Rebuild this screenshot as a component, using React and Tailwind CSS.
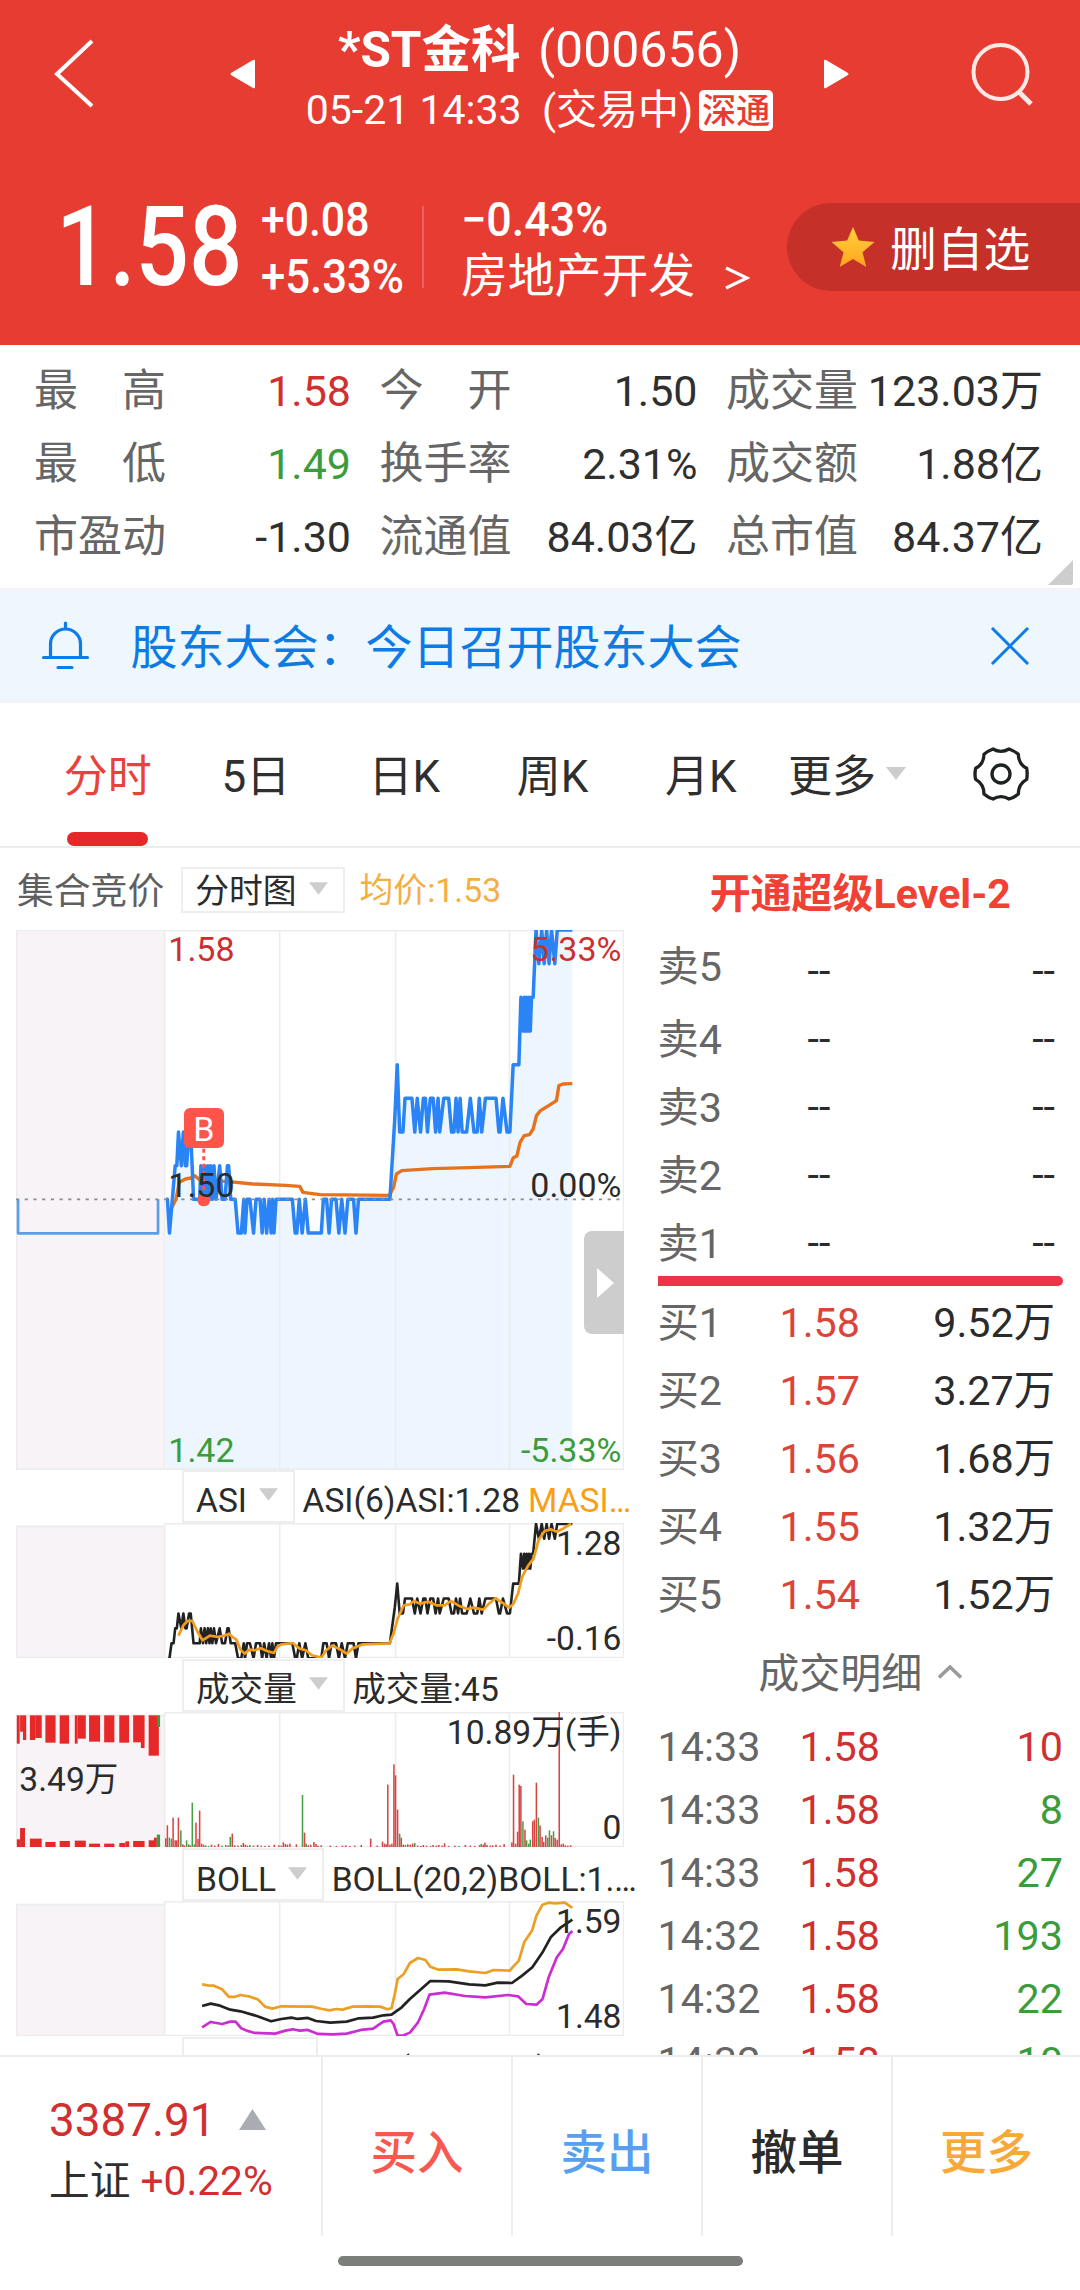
import React from 'react';
import classNames from 'clsx';

const stats = [
  ['最高', '1.58', 'text-[#d0302f]'],
  ['今开', '1.50', 'text-[#2f2f2f]'],
  ['成交量', '123.03万', 'text-[#2f2f2f]'],
  ['最低', '1.49', 'text-[#3a9c3a]'],
  ['换手率', '2.31%', 'text-[#2f2f2f]'],
  ['成交额', '1.88亿', 'text-[#2f2f2f]'],
  ['市盈动', '-1.30', 'text-[#2f2f2f]'],
  ['流通值', '84.03亿', 'text-[#2f2f2f]'],
  ['总市值', '84.37亿', 'text-[#2f2f2f]'],
];

const tabs = ['分时', '5日', '日K', '周K', '月K'];

const asks = ['卖5', '卖4', '卖3', '卖2', '卖1'];

const bids = [
  ['买1', '1.58', '9.52万'],
  ['买2', '1.57', '3.27万'],
  ['买3', '1.56', '1.68万'],
  ['买4', '1.55', '1.32万'],
  ['买5', '1.54', '1.52万'],
];

const ticks = [
  ['14:33', '1.58', '10', true],
  ['14:33', '1.58', '8', false],
  ['14:33', '1.58', '27', false],
  ['14:32', '1.58', '193', false],
  ['14:32', '1.58', '22', false],
  ['14:32', '1.58', '10', false],
];

// [x, cents above yesterday's close]
const morning = [
  [430, 1], [434, 1], [438, 2], [445, 1], [450, 2], [455, 1], [458, 1],
  [464, 2], [468, 2], [475, 0], [490, 0], [493, 1], [498, 0], [502, 1],
  [506, 0], [510, 1], [514, 0], [517, 1], [521, 0], [525, 1], [530, 0],
  [539, 1], [545, 0], [552, 0], [558, 1], [561, 1], [566, 0], [577, 0],
  [584, -1], [592, -1], [598, 0], [601, -1], [606, 0], [613, 0], [622, -1],
  [628, 0], [638, 0], [643, -1], [648, 0], [654, -1], [660, 0], [665, -1],
  [668, 0], [672, -1], [677, 0], [717, 0], [724, -1], [728, -1], [734, 0],
  [741, -1], [749, 0], [756, -1], [788, -1], [793, 0], [801, 0], [807, -1],
  [813, 0], [824, 0], [831, -1], [838, 0], [846, -1], [853, 0], [867, 0],
  [873, -1], [879, 0], [956, 0],
];

const afternoon = [
  [968, 2.4], [974, 4], [980, 2], [988, 2], [993, 3], [1010, 3], [1017, 2],
  [1023, 3], [1031, 2], [1038, 3], [1043, 3], [1048, 2], [1055, 3],
  [1062, 3], [1068, 2], [1074, 3], [1078, 2], [1088, 3], [1100, 3],
  [1107, 2], [1113, 2], [1118, 3], [1123, 2], [1128, 3], [1133, 2],
  [1144, 2], [1153, 3], [1162, 2], [1170, 2], [1175, 3], [1181, 2],
  [1190, 3], [1216, 3], [1223, 2], [1226, 2], [1233, 3], [1243, 2],
  [1250, 2], [1258, 4], [1272, 4], [1277, 6], [1282, 5], [1285, 6],
  [1288, 5], [1291, 6], [1294, 5], [1297, 6], [1300, 5], [1303, 6],
  [1307, 6], [1314, 8],
  [1321, 7], [1328, 8], [1334, 7], [1340, 8], [1346, 7], [1352, 8],
  [1360, 7], [1366, 8], [1403, 8],
];

const price = [[407, 0], [411, 0], [416, -1], ...morning, ...afternoon];
const asi = [[416, -1], [421, 0], [426, 0], ...morning, ...afternoon];

const average =
  '422,860 432,836 440,785 455,775 468,772 478,765 490,778 505,780 555,782 620,790 700,794 735,797 743,815 785,822 955,824 965,800 972,760 985,750 1060,744 1150,741 1250,737 1258,712 1267,706 1275,665 1285,645 1298,642 1307,625 1315,585 1325,570 1345,555 1364,540 1370,495 1380,490 1403,489';
const masi =
  '438,436 450,405 460,392 472,392 485,425 497,450 515,436 535,440 550,436 562,430 570,440 580,448 590,478 600,490 612,478 625,480 640,474 655,482 672,488 680,470 690,462 718,458 735,475 750,480 765,495 788,502 800,480 815,466 835,478 850,490 865,474 890,462 955,459 965,430 975,385 990,345 1005,342 1015,332 1030,340 1050,334 1070,345 1090,345 1105,332 1125,346 1145,356 1160,352 1185,358 1197,342 1215,324 1235,340 1248,352 1258,342 1270,310 1280,260 1295,225 1308,205 1320,150 1335,122 1350,117 1365,124 1380,115 1400,100';
const bollUp =
  '496,431 510,434 525,435 545,446 562,469 575,469 590,463 610,467 632,476 650,498 668,504 690,497 765,498 790,505 808,509 825,505 840,507 865,498 900,497 932,498 950,506 960,503 968,460 975,415 990,400 1005,367 1025,352 1043,358 1055,378 1075,387 1120,386 1150,392 1190,397 1210,388 1250,390 1258,378 1272,360 1285,305 1305,268 1315,225 1330,192 1345,186 1360,188 1385,186 1395,195 1403,202';
const bollMid =
  '496,496 517,489 540,495 565,507 590,512 630,526 665,542 690,535 715,531 730,535 755,532 775,541 810,546 850,543 880,533 915,531 940,524 960,522 985,500 1005,475 1030,448 1055,421 1100,422 1150,431 1190,434 1220,426 1255,427 1280,405 1305,380 1330,335 1350,290 1375,260 1403,237';
const bollLow =
  '496,560 517,544 545,550 565,543 578,543 592,563 605,570 625,577 675,579 700,570 718,566 735,570 755,568 780,580 815,581 850,579 885,568 915,564 940,543 958,539 965,550 975,585 990,584 1005,576 1025,545 1040,505 1053,462 1090,456 1140,466 1190,470 1245,463 1270,467 1290,490 1315,492 1330,475 1345,410 1365,350 1380,325 1395,280 1403,271';

// [x, top, falling]
const volume = [
  [407, 1044], [411, 1005], [416, 1042, 1], [421, 1045, 1], [425, 982],
  [430, 1050], [434, 1050], [438, 982], [444, 1020, 1], [449, 1062],
  [453, 1066], [458, 1050, 1], [463, 1062, 1], [467, 1065], [472, 937, 1],
  [477, 1062, 1], [481, 997], [486, 1046], [490, 961], [495, 1060],
  [500, 1063, 1], [505, 1066], [512, 1067, 1], [519, 1063], [527, 1066],
  [536, 1061], [545, 1066, 1], [554, 1064], [560, 1065, 1], [565, 1040, 1],
  [570, 1030], [576, 1065], [584, 1066], [592, 1064, 1], [597, 1058],
  [602, 1063], [607, 1066], [613, 1064, 1], [622, 1066], [632, 1064],
  [641, 1066, 1], [650, 1067], [660, 1066], [673, 1063], [684, 1065],
  [690, 1066, 1], [695, 1056], [700, 1061], [705, 1063], [711, 1060],
  [727, 1062], [742, 914, 1], [747, 1027], [751, 1060, 1], [756, 1065],
  [762, 1063], [770, 1055], [775, 1061], [780, 1066], [788, 1065],
  [810, 1066], [825, 1067], [840, 1066], [848, 1065], [858, 1067],
  [870, 1066], [886, 1064], [909, 1045], [925, 1066], [938, 1054],
  [943, 1060], [947, 1062], [951, 883], [956, 1063], [961, 1060],
  [966, 822], [970, 855], [975, 958], [980, 1030, 1], [984, 1042],
  [989, 1063], [994, 1064, 1], [1000, 1062], [1006, 1063], [1012, 1060],
  [1017, 1058, 1], [1024, 1066], [1032, 1067], [1038, 1064], [1046, 1066],
  [1056, 1067, 1], [1062, 1064], [1070, 1066], [1076, 1064], [1084, 1066],
  [1090, 1059], [1100, 1067], [1115, 1066], [1125, 1067, 1], [1141, 1064],
  [1153, 1066], [1164, 1067], [1176, 1064, 1], [1180, 1061, 1],
  [1185, 1063], [1189, 1057], [1194, 1064], [1202, 1066], [1208, 1065],
  [1216, 1063], [1226, 1066], [1236, 1061], [1255, 1056], [1259, 853],
  [1264, 1060], [1269, 1024], [1273, 883], [1277, 887], [1282, 993, 1],
  [1287, 1018], [1291, 1050, 1], [1296, 1060, 1], [1300, 1048, 1],
  [1306, 993], [1310, 988], [1315, 877], [1320, 982, 1], [1324, 1006],
  [1329, 1040], [1333, 1055], [1338, 1035], [1343, 1042, 1],
  [1347, 1020, 1], [1352, 1035], [1357, 1023, 1], [1361, 1043],
  [1366, 1048], [1371, 665], [1376, 1062], [1381, 1060], [1386, 1065],
  [1392, 1066], [1399, 1065],
];

// [left, right, bottom of the hanging bar, falling]
const auctionTop = [
  [42, 49, 760], [50, 57, 724], [57, 65, 749], [74, 87, 749],
  [87, 103, 743], [112, 137, 757], [147, 170, 760], [184, 191, 760],
  [191, 211, 745], [219, 246, 754], [256, 281, 756], [293, 317, 757],
  [327, 348, 756], [346, 355, 773], [365, 390, 796], [386, 393, 710, 1],
];

const auctionBottom = [
  [42, 50, 1047], [50, 62, 1013], [74, 103, 1045], [112, 137, 1055],
  [147, 172, 1052], [184, 211, 1051], [219, 246, 1060], [256, 281, 1060],
  [293, 308, 1058], [308, 317, 1053], [327, 355, 1052], [365, 378, 1050],
  [378, 385, 1042], [385, 393, 1033, 1],
];

const toPoints = (data, zero, step) =>
  data.map(([x, level]) => `${x},${zero - step * level}`).join(' ');

const Caret = ({ className }) => (
  <svg viewBox="0 0 20 13" className={classNames('fill-[#cdcdcd]', className)}>
    <path d="M0 0h20L10 13z" />
  </svg>
);

const Line = ({ points, color, width = 2.7 }) => (
  <polyline
    points={points}
    fill="none"
    stroke={color}
    strokeWidth={width}
    strokeLinejoin="round"
    vectorEffect="non-scaling-stroke"
  />
);

const Frame = ({ top, left, bottom }) => (
  <>
    <rect x="40" y={left} width="364" height={bottom - left} fill="#f7f3f7" />
    <g stroke="#ececee" strokeWidth="1.6" fill="none">
      <path
        vectorEffect="non-scaling-stroke"
        d={`M404 ${left}H41.5V${bottom - 2}H404M404 ${top + 2}H1528.5V${bottom - 2}H404V${top + 2}M686 ${top}V${bottom}M970 ${top}V${bottom}M1249 ${top}V${bottom}`}
      />
    </g>
  </>
);

const Select = ({ label, className }) => (
  <div className="flex h-full items-center border-2 border-[#eeeeee] bg-white pr-[15px] pl-[12px]">
    <span className={className}>{label}</span>
    <Caret className="mb-[3px] ml-[12px] h-[13px] w-[19px]" />
  </div>
);

const Indicator = ({ name, value, extra, high, low, auction, children, viewBox }) => (
  <div className="h-[189.3px] shrink-0 text-[33.600px]">
    <div className="flex h-[53px] items-center pl-[182px]">
      <Select label={name} className="pt-[9px] leading-[43px]" />
      <span className="ml-[7.500px] pt-[9px] leading-[43px] whitespace-nowrap">
        {value}
        {extra && <span className="ml-[8px] text-[#fa9e16]">{extra}</span>}
      </span>
    </div>
    {viewBox && (
      <div className="relative ml-[16.3px] h-[135.3px] w-[608.2px]">
        <svg viewBox={viewBox} preserveAspectRatio="none" className="h-full w-full">
          {children}
        </svg>
        <span className="absolute top-0 right-[3px] leading-[41px]">{high}</span>
        <span className="absolute right-[3px] bottom-0 leading-[39px]">{low}</span>
        {auction && <span className="absolute top-[47px] left-[3px] leading-[41px]">{auction}</span>}
      </div>
    )}
  </div>
);

const Header = () => (
  <header className="h-[345px] bg-[#e73c32] text-white">
    <div className="flex h-[148px] pl-[53px]">
      <svg viewBox="0 0 42 70" className="mt-[39px] h-[70px] w-[42px]" fill="none" stroke="#fff" strokeWidth="4">
        <path d="M39 2L4 35l35 32" />
      </svg>
      <svg viewBox="0 0 26 30" className="mt-[59px] ml-[135px] h-[30px] w-[26px] fill-white">
        <path d="M23 1q2-1 2 1v26q0 2-2 1L1 16q-1-1 0-2z" />
      </svg>
      <div className="w-[567px] text-center">
        <h1 className="mt-[18px] text-[50px] leading-[64px] whitespace-nowrap">
          <b className="mr-[5px] text-[49.500px]">*ST金科</b> (000656)
        </h1>
        <div className="flex h-[56px] items-center justify-center text-[41px] leading-[56px] whitespace-pre">
          <span>05-21 14:33  (交易中)</span>
          <span className="ml-[6px] h-[41px] w-[74px] rounded-[5px] bg-white text-center text-[34px] leading-[43px] font-medium text-[#e73c32]">
            深通
          </span>
        </div>
      </div>
      <svg viewBox="0 0 26 30" className="mt-[59px] h-[30px] w-[26px] fill-white">
        <path d="M3 1Q1 0 1 2v26q0 2 2 1l22-13q1-1 0-2z" />
      </svg>
      <svg viewBox="0 0 64 64" className="mt-[43px] ml-[122px] h-[64px] w-[64px]" fill="none" stroke="#fbe9e8" strokeWidth="4">
        <circle cx="29.500" cy="29" r="27" />
        <path d="M48 49l12 12" strokeWidth="5" />
      </svg>
    </div>
    <div className="flex h-[197px]">
      <div className="mt-[49px] ml-[56px] w-[205px]">
        <div className="origin-left scale-x-[.84] text-[112px] leading-[100px] font-medium">1.58</div>
      </div>
      <div className="mt-[43px] w-[161px] text-[48px] leading-[57px] font-medium">
        <div className="origin-left scale-x-[.89]">+0.08</div>
        <div className="origin-left scale-x-[.91]">+5.33%</div>
      </div>
      <div className="mt-[58px] h-[82px] w-[2px] bg-white/20" />
      <div className="mt-[43px] ml-[37px] w-[326px] text-[46.800px] leading-[57px] whitespace-nowrap">
        <div className="origin-left scale-x-[.935] text-[48px] font-medium">−0.43%</div>
        <div className="flex">
          房地产开发
          <svg viewBox="0 0 26 26" className="mt-[17px] ml-[29px] h-[26px] w-[26px]" fill="none" stroke="#fff" strokeWidth="3.200">
            <path d="M2 3l21 10L2 23" />
          </svg>
        </div>
      </div>
      <button className="mt-[55px] flex h-[88px] flex-1 items-center rounded-l-full bg-[#c53029] pl-[44px] text-[46.800px]">
        <svg viewBox="0 0 44 40" className="h-[40px] w-[44px] shrink-0">
          <defs>
            <linearGradient id="star" x2="0" y2="1">
              <stop stopColor="#ffd23c" />
              <stop offset="1" stopColor="#ffa51f" />
            </linearGradient>
          </defs>
          <path
            fill="url(#star)"
            d="M22 0l5.800 13.600L43.500 15 31.500 25.300 35.300 40 22 32 8.700 40l3.800-14.700L.5 15l15.700-1.400z"
          />
        </svg>
        <span className="ml-[15px] pt-[6px] whitespace-nowrap">删自选</span>
      </button>
    </div>
  </header>
);

const Stats = () => (
  <section className="relative h-[243px] pt-[10px] text-[43px]">
    <div className="grid grid-cols-[317px_318px_317px] gap-x-[28.500px] pl-[34px] leading-[73.200px]">
      {stats.map(([label, value, color]) => (
        <div key={label} className="flex justify-between whitespace-nowrap">
          <span className="flex w-[132px] shrink-0 justify-between text-[44px] text-[#666666]">
            {label.split('').map((char) => (
              <span key={char}>{char}</span>
            ))}
          </span>
          <span className={color}>{value}</span>
        </div>
      ))}
    </div>
    <svg viewBox="0 0 25 25" className="absolute right-[7px] bottom-[3px] h-[25px] w-[25px] fill-[#cdcdcd]">
      <path d="M25 0v23q0 2-2 2H0z" />
    </svg>
  </section>
);

const Notice = () => (
  <section className="flex h-[115px] items-center border-t-[3px] border-b-[3px] border-t-[#f6f2f6] border-b-[#f2f2f7] bg-[#eef6fe] text-[47px] text-[#0d7be4]">
    <svg viewBox="0 0 50 50" className="ml-[41px] h-[50px] w-[50px]" fill="none" stroke="#0d7ce8" strokeWidth="3.200" strokeLinecap="round">
      <path d="M24.500 2v6M9.500 36V23a15 15 0 0 1 30 0v13M2.500 36.500h44M17 46.500h14" />
    </svg>
    <span className="ml-[39.500px] flex-1 pt-[6px]">股东大会：今日召开股东大会</span>
    <svg viewBox="0 0 40 38" className="mr-[50px] h-[38px] w-[40px]" fill="none" stroke="#0d7ce8" strokeWidth="3">
      <path d="M2 1l36 36M38 1L2 37" />
    </svg>
  </section>
);

const Tabs = () => (
  <nav className="flex h-[145px] border-b-2 border-[#ececec] pl-[33.500px] text-[44px] text-[#2f2f2f]">
    {tabs.map((tab, index) => (
      <div
        key={tab}
        className={classNames('flex w-[148.300px] flex-col items-center justify-between', {
          'text-[#e94236]': index === 0,
        })}>
        <span className="mt-[41px] leading-[66px]">{tab}</span>
        {index === 0 && <span className="h-[14px] w-[81px] rounded-[7px] bg-[#e62829]" />}
      </div>
    ))}
    <span className="mt-[41px] ml-[13px] leading-[66px]">更多</span>
    <Caret className="mt-[64px] ml-[10px] h-[13px] w-[20px]" />
    <svg viewBox="42 36 168 162" className="mt-[44px] ml-[67px] h-[54px] w-[56px]" fill="none" stroke="#1f2222" strokeWidth="10" strokeLinejoin="round">
      <path d="M102 42Q126 56 150 42Q165 47 178 58Q178 87 203 100Q206 117 203 133Q178 147 178 177Q165 188 150 192Q126 178 102 192Q88 188 75 177Q75 147 50 133Q46 117 50 100Q75 87 75 58Q88 47 102 42Z" />
      <circle cx="126" cy="117" r="27" />
    </svg>
  </nav>
);

const PriceChart = () => {
  const points = toPoints(price, 836, 101);
  return (
    <div className="relative ml-[16.300px] h-[540px] w-[608.200px] shrink-0 text-[34px] leading-[39px]">
      <svg viewBox="40 28 1490 1620" preserveAspectRatio="none" className="h-full w-full">
        <polygon points={`407,1648 ${points} 1403,1648`} fill="#edf6fe" />
        <Frame top={28} left={28} bottom={1648} />
        <Line points="45,836 45,938 388,938 388,836" color="#5c9fe8" />
        <Line points={average} color="#e8711c" width={3.4} />
        <Line points={points} color="#2a84f5" width={3.5} />
        <path d="M40 836H1530" stroke="#8c8c8c" strokeWidth="1.800" strokeDasharray="3.200 5.500" vectorEffect="non-scaling-stroke" />
        <path d="M500 684V836" stroke="#ff5449" strokeWidth="3" strokeDasharray="4 3.500" vectorEffect="non-scaling-stroke" />
        <ellipse cx="500" cy="838" rx="16" ry="19" fill="#ff5449" />
      </svg>
      <span className="absolute top-0 left-[152px] text-[#cc2f30]">1.58</span>
      <span className="absolute top-0 right-[3px] text-[#cc2f30]">5.33%</span>
      <span className="absolute top-[236px] left-[152px]">1.50</span>
      <span className="absolute top-[236px] right-[3px]">0.00%</span>
      <span className="absolute bottom-0 left-[152px] text-[#3a9c3a]">1.42</span>
      <span className="absolute right-[3px] bottom-0 text-[#3a9c3a]">-5.33%</span>
      <span className="absolute top-[178.500px] left-[167.500px] h-[40px] w-[40px] rounded-[6px] bg-[#ff5449] text-center text-[34px] leading-[42px] text-white">
        B
      </span>
      <span className="absolute top-[301.500px] right-0 flex h-[103px] w-[40px] items-center rounded-l-[8px] bg-[#cdcdcd] pl-[13px]">
        <svg viewBox="0 0 17 30" className="h-[30px] w-[17px] fill-white">
          <path d="M0 0l17 15L0 30z" />
        </svg>
      </span>
    </div>
  );
};

const Charts = () => (
  <div className="flex w-[640px] shrink-0 flex-col">
    <div className="flex h-[81.500px] shrink-0 items-center pt-[2px] pl-[17px] text-[33.800px]">
      <span className="pt-[3px] text-[36.800px] text-[#5f5f5f]">集合竞价</span>
      <div className="mt-[1px] ml-[17px] h-[46px]">
        <Select label="分时图" className="pt-[4px]" />
      </div>
      <span className="ml-[15px] pt-[4px] text-[#f5ae45]">均价:1.53</span>
    </div>
    <PriceChart />
    <Indicator name="ASI" value="ASI(6)ASI:1.28" extra="MASI…" high="1.28" low="-0.16" viewBox="40 98 1490 406">
      <Frame top={98} left={108} bottom={504} />
      <Line points={toPoints(asi, 459, 44.8)} color="#222222" width={2.6} />
      <Line points={masi} color="#f39c1c" />
    </Indicator>
    <Indicator name="成交量" value="成交量:45" high="10.89万(手)" low="0" auction="3.49万" viewBox="40 665 1490 406">
      <Frame top={665} left={675} bottom={1071} />
      {auctionTop.map(([x1, x2, y, down]) => (
        <rect key={x1} x={x1} y="675" width={x2 - x1} height={y - 675} fill={down ? '#3a9c3a' : '#e62829'} />
      ))}
      {auctionBottom.map(([x1, x2, y, down]) => (
        <rect key={x1} x={x1} y={y} width={x2 - x1} height={1071 - y} fill={down ? '#3a9c3a' : '#e62829'} />
      ))}
      {volume.map(([x, y, down]) => (
        <rect key={x} x={x - 2} y={y} width="3.800" height={1071 - y} fill={down ? '#4a9f45' : '#d94545'} />
      ))}
    </Indicator>
    <Indicator name="BOLL" value="BOLL(20,2)BOLL:1.…" high="1.59" low="1.48" viewBox="40 181 1490 406">
      <Frame top={181} left={192} bottom={587} />
      <Line points={bollUp} color="#eb9f25" />
      <Line points={bollMid} color="#222222" />
      <Line points={bollLow} color="#cb2dd3" />
    </Indicator>
    <Indicator name="DMA" value="DMA(10,50,10)DIF" />
  </div>
);

const Book = () => (
  <div className="flex-1 pt-[14px] pr-[17px] pl-[17.500px] text-[41.300px]">
    <h2 className="text-center text-[41px] leading-[65px] font-bold text-[#f04134]">开通超级Level-2</h2>
    <div className="pt-[11px]">
      {asks.map((label, index) => (
        <div key={label} className="flex h-[68px] items-center pr-[8px] whitespace-nowrap">
          <span
            className={classNames('w-[122px] text-[#666666]', {
              'mb-[9px]': index === 0,
              'mt-[2px]': index > 0,
            })}>
            {label}
          </span>
          <span className="w-[79px] text-center">--</span>
          <span className="flex-1 text-right">--</span>
        </div>
      ))}
    </div>
    <div className="-mt-[2px] h-[10px] rounded-r-full bg-[#ee3349]" />
    <div className="pt-[4px]">
      {bids.map(([label, bid, amount]) => (
        <div key={label} className="flex h-[68px] items-center pr-[8px] whitespace-nowrap">
          <span className="w-[122px] text-[#666666]">{label}</span>
          <span className="w-[83px] text-[#dd4439]">{bid}</span>
          <span className="flex-1 text-right">{amount}</span>
        </div>
      ))}
    </div>
    <div className="flex h-[80px] items-center justify-center pt-[9px] text-[41px] text-[#666666]">
      成交明细
      <svg viewBox="0 0 24 14" className="mb-[6px] ml-[16px] h-[14px] w-[24px]" fill="none" stroke="#9a9a9e" strokeWidth="3.500">
        <path d="M1 12.500L12 2l11 10.500" />
      </svg>
    </div>
    <div className="pt-[6px]">
      {ticks.map(([time, deal, amount, up], index) => (
        <div key={index} className="flex h-[63px] items-center">
          <span className="w-[142px] text-[#666666]">{time}</span>
          <span className="flex-1 text-[#d0302f]">{deal}</span>
          <span className={up ? 'text-[#d0302f]' : 'text-[#3a9c3a]'}>{amount}</span>
        </div>
      ))}
    </div>
  </div>
);

const BottomBar = () => (
  <footer className="h-[235px] border-t-2 border-[#ececec] bg-white">
    <div className="flex h-[179px] text-[46.500px] font-medium">
      <div className="w-[321px] pt-[35px] pl-[49px] font-normal text-[#d0302f]">
        <div className="flex items-center text-[45.800px] leading-[58px]">
          3387.91
          <svg viewBox="0 0 27 21" className="mb-[3px] ml-[23px] h-[21px] w-[27px] fill-[#aaacb4]">
            <path d="M13.500 0L27 21H0z" />
          </svg>
        </div>
        <div className="text-[40.700px] leading-[62px]">
          <span className="text-[#2f2f2f]">上证</span> +0.22%
        </div>
      </div>
      <button className="w-[190px] border-l-2 border-[#ececec] pt-[14px] text-[#f8584e]">买入</button>
      <button className="w-[190px] border-l-2 border-[#ececec] pt-[14px] text-[#589ff0]">卖出</button>
      <button className="w-[190px] border-l-2 border-[#ececec] pt-[14px]">撤单</button>
      <button className="w-[189px] border-l-2 border-[#ececec] pt-[14px] text-[#f6a938]">更多</button>
    </div>
    <div className="mx-auto mt-[20px] h-[10px] w-[405px] rounded-full bg-[#7c7e7b]" />
  </footer>
);

const App = () => (
  <div className="flex h-[2290px] w-[1080px] flex-col overflow-hidden bg-white font-[Roboto,'Noto_Sans_CJK_SC',sans-serif] text-[#2b2b2b]">
    <Header />
    <Stats />
    <Notice />
    <Tabs />
    <main className="flex min-h-0 flex-1 overflow-hidden">
      <Charts />
      <Book />
    </main>
    <BottomBar />
  </div>
);

export default App;
